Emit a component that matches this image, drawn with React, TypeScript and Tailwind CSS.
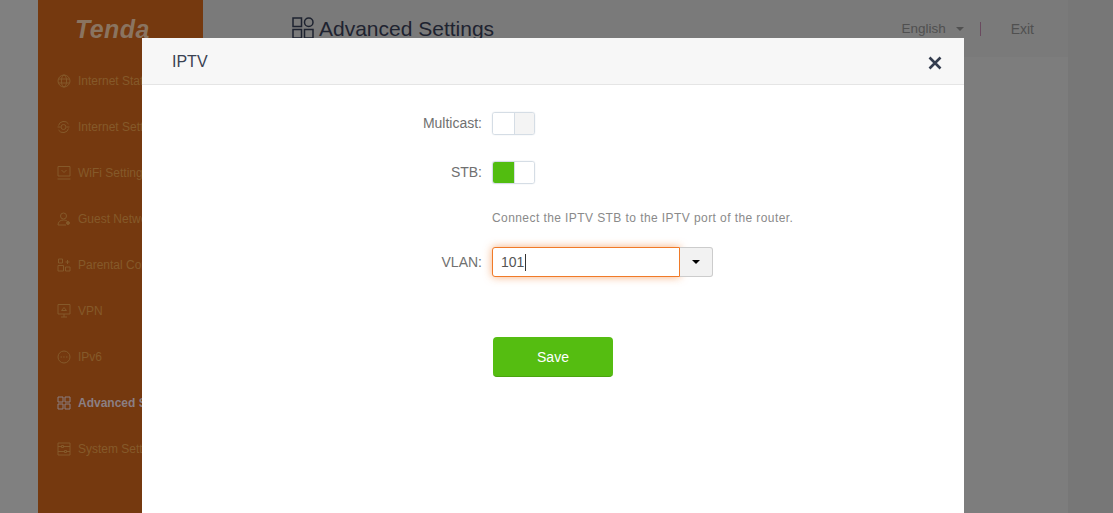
const iconClass = "h-[14px] w-[14px] shrink-0";

function GlobeIcon() {
  return (
    <svg viewBox="0 0 14 14" className={iconClass} fill="none" stroke="currentColor" strokeWidth="1">
      <circle cx="7" cy="7" r="6" />
      <ellipse cx="7" cy="7" rx="2.6" ry="6" />
      <path d="M1.4 5h11.2M1.4 9h11.2" />
    </svg>
  );
}

function SyncIcon() {
  return (
    <svg viewBox="0 0 14 14" className={iconClass} fill="none" stroke="currentColor" strokeWidth="1">
      <path d="M1.500 5.500A5.500 5.500 0 0 1 11.500 4M11.500 8.500A5.500 5.500 0 0 1 1.500 10" />
      <circle cx="6.500" cy="7" r="2.500" />
      <path d="M0.500 7h3M9.500 7h3" />
    </svg>
  );
}

function WifiIcon() {
  return (
    <svg viewBox="0 0 14 14" className={iconClass} fill="none" stroke="currentColor" strokeWidth="1">
      <path d="M1 0.500h12v9.500H1zM0.500 13h13" />
      <path d="M4.500 4l2.500 2.500L9.500 4" />
    </svg>
  );
}

function GuestIcon() {
  return (
    <svg viewBox="0 0 14 14" className={iconClass} fill="none" stroke="currentColor" strokeWidth="1">
      <circle cx="6.500" cy="4" r="3" />
      <path d="M9 13H1c0-3 2-5 5.500-5 1.500 0 3 .5 4 1.500" />
      <circle cx="11" cy="11" r="1.500" fill="currentColor" />
    </svg>
  );
}

function ParentalIcon() {
  return (
    <svg viewBox="0 0 14 14" className={iconClass} fill="none" stroke="currentColor" strokeWidth="1">
      <path d="M1.500 1h4v4h-4zM1 7.500h5.500V13H1zM8.500 9h4.500v4H8.500z" />
      <path d="M10.500 2v4M8.500 4h4" />
    </svg>
  );
}

function VpnIcon() {
  return (
    <svg viewBox="0 0 14 14" className={iconClass} fill="none" stroke="currentColor" strokeWidth="1">
      <path d="M1 0.500h12v9.500H1zM7 10v3M4 13h6" />
      <path d="M4.500 6.500h5L7 3.500z" />
    </svg>
  );
}

function Ipv6Icon() {
  return (
    <svg viewBox="0 0 14 14" className={iconClass} fill="none" stroke="currentColor" strokeWidth="1">
      <circle cx="7" cy="7" r="6" />
      <path d="M3.500 7h1.500M6.200 7h1.500M9 7h1.500" />
    </svg>
  );
}

function GridIcon() {
  return (
    <svg viewBox="0 0 14 14" className={iconClass} fill="none" stroke="currentColor" strokeWidth="1">
      <path d="M1 1h5v5H1zM8 1h5v5H8zM1 8h5v5H1zM8 8h5v5H8z" />
    </svg>
  );
}

function HeadingIcon() {
  return (
    <svg viewBox="0 0 22 22" className="-mt-[2px] h-[22px] w-[22px] shrink-0" fill="none" stroke="currentColor" strokeWidth="1.500">
      <path d="M1 1h8.500v8.500H1zM1 12.500h8.500V21H1zM12.500 12.500H21V21h-8.500z" />
      <circle cx="16.750" cy="5.250" r="4.250" />
    </svg>
  );
}

function SystemIcon() {
  return (
    <svg viewBox="0 0 14 14" className={iconClass} fill="none" stroke="currentColor" strokeWidth="1">
      <path d="M1 1h12v12H1z" />
      <path d="M1 4.500h3M7 4.500h6M1 9.500h6M10 9.500h3M4.500 3.500h2v2h-2zM7.500 8.500h2v2h-2z" />
    </svg>
  );
}

const menu = [
  { label: "Internet Status", icon: <GlobeIcon /> },
  { label: "Internet Settings", icon: <SyncIcon /> },
  { label: "WiFi Settings", icon: <WifiIcon /> },
  { label: "Guest Network", icon: <GuestIcon /> },
  { label: "Parental Control", icon: <ParentalIcon /> },
  { label: "VPN", icon: <VpnIcon /> },
  { label: "IPv6", icon: <Ipv6Icon /> },
  { label: "Advanced Settings", icon: <GridIcon />, active: true },
  { label: "System Settings", icon: <SystemIcon /> },
];

function Sidebar() {
  return (
    <aside className="w-[165px] shrink-0 bg-[#75390f]">
      <div className="h-[58px] pl-[37px] pt-[16px] text-[25px] leading-[27px] font-bold italic tracking-[0.4px] text-[#8a7460]">
        Tenda
      </div>
      <nav className="flex flex-col">
        {menu.map((item) => (
          <div
            key={item.label}
            className={`flex h-[46px] items-center gap-[7px] pl-[19px] text-[12px] whitespace-nowrap ${
              item.active ? "font-bold text-[#8b7f83]" : "text-[#85592a]"
            }`}
          >
            {item.icon}
            {item.label}
          </div>
        ))}
      </nav>
    </aside>
  );
}

function Toggle({ on }: { on: boolean }) {
  return (
    <div className="flex h-[23px] w-[43px] overflow-hidden rounded-[3px] border border-[#d5dde5] shadow-[0_0_1px_rgba(120,140,160,0.4)]">
      <div className={`w-[21px] ${on ? "bg-[#52bd10]" : "bg-white"}`} />
      <div className={`flex-1 border-l border-[#d5dde5] ${on ? "bg-white" : "bg-[#f4f4f4]"}`} />
    </div>
  );
}

function Field({ label, children }: { label: string; children: React.ReactNode }) {
  return (
    <div className="flex items-center">
      <div className="w-[339px] pr-[10px] text-right text-[14px] text-[#707070]">{label}</div>
      {children}
    </div>
  );
}

function IptvDialog() {
  return (
    <div className="absolute left-[142px] top-[38px] h-[475px] w-[822px] bg-white">
      <div className="flex h-[47px] items-center justify-between border-b border-[#e5e5e5] bg-[#f7f7f7] pl-[30px] pr-[22px] pt-[1px]">
        <span className="text-[16px] text-[#3a4252]">IPTV</span>
        <svg viewBox="0 0 14 14" className="mt-[3px] h-[14px] w-[14px] text-[#333c4e]" fill="none" stroke="currentColor" strokeWidth="2.600">
          <path d="M1.500 1.500l11 11M12.500 1.500l-11 11" />
        </svg>
      </div>
      <div className="pl-[11px] pt-[27px]">
        <Field label="Multicast:">
          <Toggle on={false} />
        </Field>
        <div className="mt-[26px]">
          <Field label="STB:">
            <Toggle on />
          </Field>
        </div>
        <p className="mt-[26px] pl-[339px] text-[12px] leading-[16px] tracking-[0.42px] text-[#8a8a8a]">
          Connect the IPTV STB to the IPTV port of the router.
        </p>
        <div className="mt-[21px]">
          <Field label="VLAN:">
            <div className="flex h-[30px] w-[221px]">
              <div className="flex w-[188px] items-center rounded-l-[3px] border border-[#f07a28] bg-white pl-[8px] text-[14px] text-[#555555] shadow-[0_0_8px_rgba(240,122,40,0.6)]">
                101
                <span className="ml-[1px] h-[17px] w-px bg-[#333333]" />
              </div>
              <div className="flex flex-1 items-center justify-center rounded-r-[3px] border border-l-0 border-[#cccccc] bg-[#f2f2f2]">
                <span className="h-0 w-0 border-x-[4px] border-t-[4px] border-x-transparent border-t-black" />
              </div>
            </div>
          </Field>
        </div>
        <button className="ml-[340px] mt-[60px] h-[40px] w-[120px] rounded-[4px] border-b border-[#4aa30f] bg-[#55bd11] pt-[2px] text-[14px] text-white">
          Save
        </button>
      </div>
    </div>
  );
}

export default function App() {
  return (
    <div className="relative h-[513px] w-[1113px] overflow-hidden bg-[#808080] font-['Liberation_Sans',sans-serif]">
      <div className="ml-[38px] flex h-full w-[1030px]">
        <Sidebar />
        <main className="flex-1">
          <header className="flex h-[57px] items-center justify-between bg-[#7a7a7a] pl-[89px] pr-[34px] pt-[1px]">
            <div className="flex items-center gap-[5px] text-[21px] text-[#1e2330]">
              <HeadingIcon />
              Advanced Settings
            </div>
            <div className="flex items-center text-[14px] text-[#505050]">
              <span className="text-[13.500px]">English</span>
              <span className="ml-[10px] h-0 w-0 border-x-[4px] border-t-[4px] border-x-transparent border-t-[#505050]" />
              <span className="ml-[16px] h-[14px] w-px bg-[#6a4a5f]" />
              <span className="ml-[30px]">Exit</span>
            </div>
          </header>
          <div className="h-full bg-[#7d7d7d]" />
        </main>
      </div>
      <div className="absolute right-0 top-0 h-full w-[45px] bg-[#777777]" />
      <IptvDialog />
    </div>
  );
}
